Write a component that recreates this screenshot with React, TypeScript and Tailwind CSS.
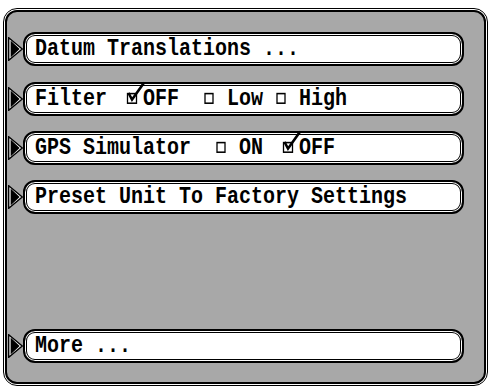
import type { ReactNode } from 'react';

const Arrow = () => (
  <svg width="15" height="24" viewBox="0 0 15 24" className="shrink-0">
    <polygon points="0.7,0.7 14.2,12 0.7,23.3" fill="white" stroke="black" strokeWidth="1.4" />
    <polygon points="2.6,3.6 11.6,12 2.6,20.4" fill="black" />
  </svg>
);

// empty option box, one character cell wide
const Box = () => (
  <svg width="12" height="9" viewBox="0 0 12 9" className="inline-block overflow-visible">
    <rect x="2" y="0.5" width="8" height="8" fill="white" stroke="black" strokeWidth="1.3" />
  </svg>
);

// ticked option box, two character cells wide, tick sticks out above
const Checked = () => (
  <svg width="24" height="9" viewBox="0 0 24 9" className="inline-block overflow-visible">
    <rect x="8.5" y="0.5" width="9" height="8" fill="white" stroke="black" strokeWidth="1.3" />
    <path d="M9.5 0 L13 5.5 L25 -8.5" fill="none" stroke="black" strokeWidth="2.4" />
  </svg>
);

const Row = ({ children, className = '' }: { children: ReactNode; className?: string }) => (
  <div className={`flex items-center h-[34px] ${className}`}>
    <Arrow />
    <div className="w-[441px] h-full rounded-[12px] border-2 border-black bg-white shadow-[inset_0_0_0_1px_white,inset_0_0_0_2px_black] flex items-center pl-[10px]">
      <div className="whitespace-pre scale-y-120 font-bold text-[20px] leading-none text-black font-['Liberation_Mono',monospace]">
        {children}
      </div>
    </div>
  </div>
);

export default function App() {
  return (
    <div className="w-[493px] h-[387px] bg-white pl-[3px] pt-[8px]">
      <div className="w-[485px] h-[378px] rounded-[14px] border border-black bg-white p-[1px]">
        <div className="h-full rounded-[12px] border-2 border-black bg-[#a8a8a8] flex flex-col pl-[1px] pt-[20px] pb-[19px]">
          <Row>Datum Translations ...</Row>
          <Row className="mt-[16px]">
            {'Filter '}
            <Checked />
            {'OFF  '}
            <Box />
            {' Low '}
            <Box />
            {' High'}
          </Row>
          <Row className="mt-[15px]">
            {'GPS Simulator  '}
            <Box />
            {' ON '}
            <Checked />
            {'OFF'}
          </Row>
          <Row className="mt-[15px]">Preset Unit To Factory Settings</Row>
          <div className="flex-1" />
          <Row>More ...</Row>
        </div>
      </div>
    </div>
  );
}
